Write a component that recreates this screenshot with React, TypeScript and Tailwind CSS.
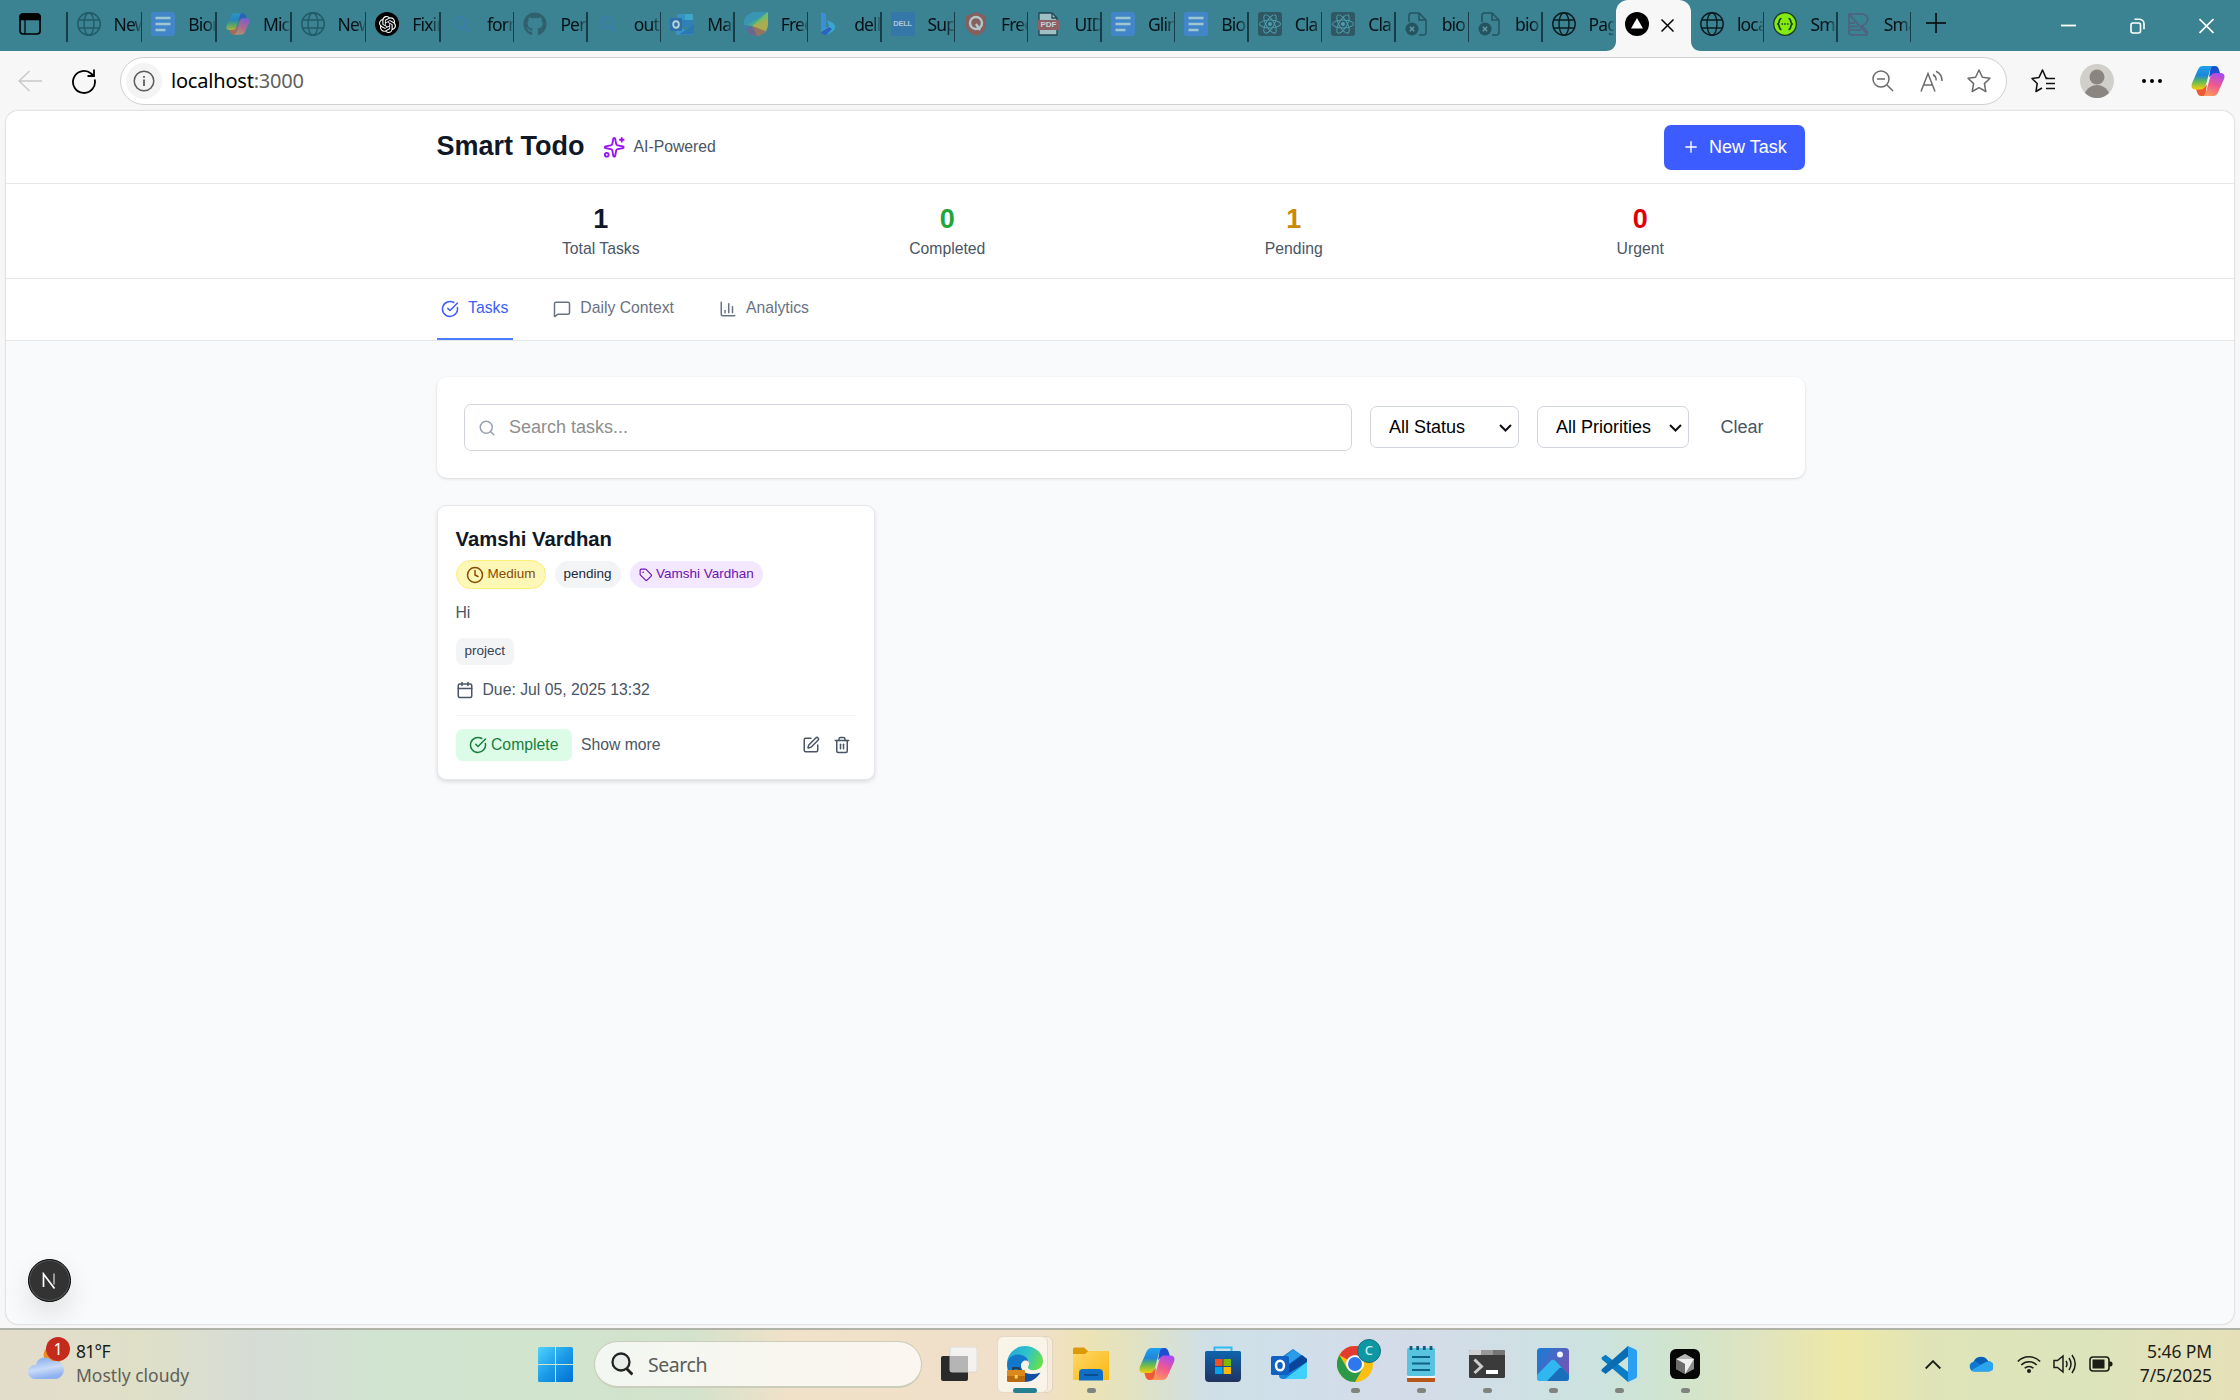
import React, { ReactNode, useId } from "react";
import {
  Calendar,
  ChartColumn,
  CircleCheckBig,
  Clock,
  MessageSquare,
  Plus,
  Search,
  Sparkles,
  SquarePen,
  Tag,
  Trash2,
} from "lucide-react";
import { FaGithub, FaReact } from "react-icons/fa";
import { SiOpenai } from "react-icons/si";

/* ---------- shared glyphs ---------- */

function Globe() {
  return (
    <svg viewBox="0 0 24 24" className="size-6" fill="none" stroke="currentColor" strokeWidth="1.4">
      <circle cx="12" cy="12" r="11.2" />
      <ellipse cx="12" cy="12" rx="5" ry="11.2" />
      <path d="M2 8h20M2 16h20" />
    </svg>
  );
}

function Copilot({ className }: { className: string }) {
  const id = useId();
  return (
    <svg viewBox="0 0 36 34" className={className}>
      <defs>
        <linearGradient id={id + "a"} x1="0" y1="0" x2="0" y2="1">
          <stop offset="0" stopColor="#1fa2f0" />
          <stop offset="0.4" stopColor="#1d86d8" />
          <stop offset="0.65" stopColor="#5cb85a" />
          <stop offset="1" stopColor="#f7cf0a" />
        </linearGradient>
        <linearGradient id={id + "b"} x1="0.7" y1="0" x2="0.3" y2="1">
          <stop offset="0" stopColor="#a84bf0" />
          <stop offset="0.5" stopColor="#f0598f" />
          <stop offset="1" stopColor="#fb9a5c" />
        </linearGradient>
      </defs>
      <path d="M21 1h4c3 0 4 1.500 5 5l1.400 4.500H24c-2.500 0-4.500 1.500-5 3z" fill="#1b4fd0" />
      <path d="M15 33h-4c-3 0-4-1.500-5-5L4.600 23.500H12c2.500 0 4.500-1.500 5-3z" fill="#ee5a35" />
      <path d="M13 1c-3.500 0-5.200 2-6.300 5.500L1 19.500C-.3 23.500 1 26 4.500 26H10c3.500 0 5-2 6-5.500l3.500-13C20.500 4 21.500 1 25 1z" fill={`url(#${id}a)`} />
      <path d="M23 33c3.500 0 5.200-2 6.300-5.500L35 15c1.300-4 0-6.500-3.500-6.500H26c-3.500 0-5 2-6 5.500l-3.500 12.500C15.500 30 14.500 33 11 33z" fill={`url(#${id}b)`} />
    </svg>
  );
}

function DocsIcon() {
  return (
    <svg viewBox="0 0 24 24" className="size-6">
      <rect width="24" height="24" rx="3" fill="#4285c8" />
      <path d="M4.500 6h15M4.500 12h15M4.500 18h10" stroke="#9cc9d0" strokeWidth="2.300" />
    </svg>
  );
}

function FadedSearch() {
  return (
    <svg viewBox="0 0 24 24" className="size-6" fill="none" stroke="#3a7fae" strokeWidth="2">
      <circle cx="10.500" cy="10.500" r="5.500" />
      <path d="M14.500 14.500l5 5" />
    </svg>
  );
}

function OutlookIcon({ className }: { className: string }) {
  return (
    <svg viewBox="0 0 36 36" className={className}>
      <path d="M8 13L22 3l14 10v16a4 4 0 0 1-4 4H12a4 4 0 0 1-4-4z" fill="#1583d8" />
      <path d="M12 12L22 4l8 5-14 10z" fill="#2b9cea" />
      <path d="M16 20L31 9l5 4v3L18 27z" fill="#0a459c" />
      <path d="M14 33L36 16v13a4 4 0 0 1-4 4z" fill="#3fd0fb" />
      <rect y="10" width="18" height="19" rx="1.500" fill="#0f62c4" />
      <ellipse cx="9" cy="19.500" rx="4" ry="4.800" fill="none" stroke="#fff" strokeWidth="2.500" />
    </svg>
  );
}

/* Older Outlook mark: envelope with a tiled sheet behind it. */
function OutlookClassic() {
  return (
    <svg viewBox="0 0 24 24" className="size-6">
      <path d="M7 2h16v13H7z" fill="#2f80b4" />
      <path d="M7 2h8v6H7z" fill="#3592c2" />
      <path d="M15 2h8v6h-8z" fill="#3fa6c8" />
      <path d="M6 12l9 6 9-6v9a2 2 0 0 1-2 2H8a2 2 0 0 1-2-2z" fill="#3b96cc" />
      <path d="M24 12L9 22.500h13a2 2 0 0 0 2-2z" fill="#2d78ae" />
      <rect y="6" width="12" height="13" rx="1.200" fill="#2c70a8" />
      <ellipse cx="6" cy="12.500" rx="2.800" ry="3.300" fill="none" stroke="#b8d3da" strokeWidth="1.900" />
    </svg>
  );
}

function LeafIcon() {
  return (
    <svg viewBox="0 0 24 24" className="size-6">
      <defs>
        <clipPath id="leaf">
          <path d="M12 0h12v12A12 12 0 1 1 12 0z" />
        </clipPath>
      </defs>
      <g clipPath="url(#leaf)">
        <rect width="24" height="24" fill="#45a88e" />
        <path d="M0 0h24L0 15z" fill="#3a95b5" />
        <path d="M24 0L8 14l16-4z" fill="#78bb70" />
        <path d="M24 6L8 14l16 8z" fill="#a8ac52" />
        <path d="M8 14l16 6v4H12z" fill="#96735f" />
        <path d="M8 14l5 10H0v-5z" fill="#68678f" />
        <path d="M8 14L0 21v-8z" fill="#4577a5" />
      </g>
    </svg>
  );
}

function BingIcon() {
  return (
    <svg viewBox="0 0 24 24" className="size-6">
      <path d="M4 0l5 2v15l-5 4z" fill="#3b8fd8" />
      <path d="M10 8l6 3c3 2 3 7-1 9l-6 3c-3 0-5-2-5-4l8-5z" fill="#3aa5cf" />
      <path d="M4 20l8-5 3 2-6 6c-3 0-5-1-5-3z" fill="#2c63c0" />
    </svg>
  );
}

function DellIcon() {
  return (
    <span className="flex size-6 items-center justify-center bg-[#3577a8] font-['Liberation_Sans'] text-[7.500px] font-bold tracking-[-0.300px] text-[#a8cbd6]">
      DELL
    </span>
  );
}

function ShieldQ() {
  return (
    <svg viewBox="0 0 24 24" className="size-6">
      <path d="M12 0l10 4v9c0 6-5 9-10 11C7 22 2 19 2 13V4z" fill="#85605f" />
      <circle cx="12" cy="11" r="6" fill="none" stroke="#b4c8cb" strokeWidth="2.400" />
      <path d="M12 12l4 6" stroke="#b4c8cb" strokeWidth="2.400" />
    </svg>
  );
}

function PdfIcon() {
  return (
    <span className="relative block size-6">
      <svg viewBox="0 0 24 24" className="size-6">
        <path d="M2 1h13l5 5v17H2z" fill="#9fbfc4" stroke="#1f4651" strokeWidth="1.300" />
        <path d="M15 1v5h5" fill="none" stroke="#1f4651" strokeWidth="1.300" />
      </svg>
      <span className="absolute top-[8px] left-0 flex h-[10px] w-[22px] items-center justify-center bg-[#8f5f66] font-['Liberation_Sans'] text-[8px] font-bold text-[#c3d3d6]">
        PDF
      </span>
    </span>
  );
}

function ReactIcon() {
  return (
    <span className="flex size-6 items-center justify-center rounded-[3px] bg-[#2f5864]">
      <FaReact className="size-[22px] text-[#4d9fb2]" />
    </span>
  );
}

function FileX() {
  return (
    <svg viewBox="0 0 24 24" className="size-6" fill="none" stroke="#245460" strokeWidth="1.500">
      <path d="M4 10V3.500A2.500 2.500 0 0 1 6.500 1H14l7 7v12.500a2.500 2.500 0 0 1-2.500 2.500H14" />
      <path d="M14 1v7h7" />
      <circle cx="7" cy="17" r="6.500" fill="#245460" stroke="none" />
      <path d="M4.800 14.800l4.400 4.400M9.200 14.800l-4.400 4.400" stroke="#5c9aa6" />
    </svg>
  );
}

function Swagger() {
  return (
    <svg viewBox="0 0 24 24" className="size-6" fill="none" stroke="#173b2b" strokeWidth="1.300">
      <circle cx="12" cy="12" r="11.300" fill="#85ea0d" />
      <path d="M8.500 6.500c-3 0-1.500 4-3.500 5.500 2 1.500.5 5.500 3.500 5.500M15.500 6.500c3 0 1.500 4 3.500 5.500-2 1.500-.5 5.500-3.500 5.500M8.500 12h1.600M11.200 12h1.600M14 12h1.600" strokeWidth="1.700" />
    </svg>
  );
}

function SmDoc() {
  return (
    <svg viewBox="0 0 24 24" className="size-6" fill="none" stroke="#505f7d" strokeWidth="1.500">
      <path d="M2 2h12c6 0 8 4 6 8-1 2-3 3-5 4l5 5v4H5a3 3 0 0 1-3-3z" />
      <path d="M3 3l16 18M3 11h5M3 14.500h8M3 18h11" />
    </svg>
  );
}

/* ---------- browser chrome ---------- */

type BrowserTab = { icon: ReactNode; title: string; wide?: boolean; noSep?: boolean };

const leftTabs: BrowserTab[] = [
  { icon: <span className="text-[#235965]"><Globe /></span>, title: "New", wide: true },
  { icon: <DocsIcon />, title: "Biom", wide: true },
  { icon: <Copilot className="size-6 opacity-60" />, title: "Micr", wide: true },
  { icon: <span className="text-[#235965]"><Globe /></span>, title: "New", wide: true },
  {
    icon: (
      <span className="flex size-6 items-center justify-center rounded-full bg-black text-white">
        <SiOpenai className="size-[17px]" />
      </span>
    ),
    title: "Fixin",
    wide: true,
  },
  { icon: <FadedSearch />, title: "form" },
  { icon: <FaGithub className="size-6 text-[#30606d]" />, title: "Pers" },
  { icon: <FadedSearch />, title: "outl" },
  { icon: <OutlookClassic />, title: "Mail" },
  { icon: <LeafIcon />, title: "Free" },
  { icon: <BingIcon />, title: "dell" },
  { icon: <DellIcon />, title: "Sup" },
  { icon: <ShieldQ />, title: "Free" },
  { icon: <PdfIcon />, title: "UID" },
  { icon: <DocsIcon />, title: "Glim" },
  { icon: <DocsIcon />, title: "Bio" },
  { icon: <ReactIcon />, title: "Cla" },
  { icon: <ReactIcon />, title: "Cla" },
  { icon: <FileX />, title: "bio" },
  { icon: <FileX />, title: "bio" },
  { icon: <span className="text-[#0a1c20]"><Globe /></span>, title: "Page", noSep: true },
];

const rightTabs: BrowserTab[] = [
  { icon: <span className="text-[#0a1c20]"><Globe /></span>, title: "loca" },
  { icon: <Swagger />, title: "Sma" },
  { icon: <SmDoc />, title: "Sma" },
];

function InactiveTab({ tab }: { tab: BrowserTab }) {
  return (
    <div className={`flex h-12 shrink-0 items-center pl-[9px] ${tab.wide ? "w-[74.700px]" : "w-[73.440px]"}`}>
      <div className="w-6 shrink-0">{tab.icon}</div>
      <div className="ml-[13px] min-w-0 flex-1 overflow-hidden text-[17.500px] leading-[30px] tracking-[-0.850px] whitespace-nowrap text-[#061215] [mask-image:linear-gradient(90deg,#000_68%,transparent_108%)]">
        {tab.title}
      </div>
      <div className={tab.noSep ? "mt-1 h-[30px] w-[1.500px]" : "mt-[5px] h-[30px] w-[1.500px] bg-[#173e48]"} />
    </div>
  );
}

function TabStrip() {
  return (
    <div className="flex h-[51px] shrink-0 bg-[#3b8292]">
      <div className="flex h-12 w-[67.500px] shrink-0 items-center pl-[19px]">
        <svg viewBox="0 0 22 22" className="size-[22px]" fill="none" stroke="#000" strokeWidth="1.700">
          <rect x="1" y="1" width="20" height="20" rx="3" />
          <path d="M1 4a3 3 0 0 1 3-3h14a3 3 0 0 1 3 3v2.500H1z" fill="#000" />
          <path d="M6 6v15" strokeWidth="1.200" />
        </svg>
        <div className="mt-[5px] ml-auto h-[30px] w-[1.500px] bg-[#173e48]" />
      </div>
      {leftTabs.map((t, i) => (
        <InactiveTab key={i} tab={t} />
      ))}
      <div className="relative flex w-[75px] shrink-0 items-center rounded-t-[12px] bg-[#f7f7f7] pb-[3px] pl-[9px]">
        <svg viewBox="0 0 10 10" className="absolute bottom-0 left-[-10px] size-[10px]">
          <path d="M10 0v10H0C6 10 10 6 10 0z" fill="#f7f7f7" />
        </svg>
        <svg viewBox="0 0 10 10" className="absolute right-[-10px] bottom-0 size-[10px]">
          <path d="M0 0v10h10C4 10 0 6 0 0z" fill="#f7f7f7" />
        </svg>
        <svg viewBox="0 0 24 24" className="size-6">
          <circle cx="12" cy="12" r="12" />
          <path d="M12 6l6 10.500H6z" fill="#fff" />
        </svg>
        <svg viewBox="0 0 13 13" className="mt-[2px] ml-[12px] size-[13px]" stroke="#000" strokeWidth="1.500">
          <path d="M.5.5l12 12M12.500.5l-12 12" />
        </svg>
      </div>
      {rightTabs.map((t, i) => (
        <InactiveTab key={i} tab={t} />
      ))}
      <svg viewBox="0 0 20 20" className="mt-[13px] ml-[15px] size-5 shrink-0" stroke="#000" strokeWidth="1.500">
        <path d="M10 0v20M0 10h20" />
      </svg>
      <div className="ml-auto flex h-[51px] items-center pr-[26px]">
        <svg viewBox="0 0 15 16" className="h-4 w-[15px]" stroke="#fff" strokeWidth="1.800">
          <path d="M0 7.500h15" />
        </svg>
        <svg viewBox="0 0 15 16" className="ml-[54px] h-4 w-[15px]" fill="none" stroke="#fff" strokeWidth="1.600">
          <rect x="1" y="5" width="9.500" height="10" rx="2" />
          <path d="M4.500 1.200h5a4.500 4.500 0 0 1 4.500 4.500v5.500" />
        </svg>
        <svg viewBox="0 0 15 16" className="ml-[54px] h-4 w-[15px]" stroke="#fff" strokeWidth="1.700">
          <path d="M.5 1l14 14M14.500 1L.5 15" />
        </svg>
      </div>
    </div>
  );
}

function Toolbar() {
  return (
    <div className="flex h-[59px] shrink-0 items-center bg-[#f7f7f7] pt-[1px] pl-[18px]">
      <svg viewBox="0 0 24 22" className="h-[22px] w-6 shrink-0" fill="none" stroke="#c8c8c8" strokeWidth="1.500">
        <path d="M24 11H1M11.500 1L1 11l10.500 10" />
      </svg>
      <svg viewBox="0 0 24 25" className="ml-[30px] h-[25px] w-6 shrink-0" fill="none" stroke="#000" strokeWidth="1.800">
        <path d="M22.700 10.500A11 11 0 1 1 19 4.500l3 2.500" />
        <path d="M22 .5V7h-6.500" />
      </svg>
      <div className="ml-[24px] flex h-[48px] w-[1887px] shrink-0 items-center rounded-full border-[1.500px] border-[#d0d0d0] bg-white pl-[5px]">
        <div className="flex size-9 items-center justify-center rounded-full bg-[#f4f4f4]">
          <svg viewBox="0 0 22 22" className="size-[22px]" fill="none" stroke="#5c5c5c" strokeWidth="1.500">
            <circle cx="11" cy="11" r="9.800" />
            <path d="M11 9.500v6.500M11 6v1.800" strokeWidth="1.800" />
          </svg>
        </div>
        <div className="ml-[9px] text-[20px] tracking-[-0.200px] text-black">
          localhost<span className="text-[#5f5f5f]">:3000</span>
        </div>
        <div className="ml-auto flex items-center pr-[15px] text-[#6b6b6b]">
          <svg viewBox="0 0 22 22" className="size-[22px]" fill="none" stroke="currentColor" strokeWidth="1.500">
            <circle cx="9" cy="9" r="8" />
            <path d="M15 15l6 6M5 9h8" />
          </svg>
          <svg viewBox="0 0 24 22" className="ml-[26px] h-[22px] w-6" fill="none" stroke="currentColor" strokeWidth="1.500">
            <path d="M1 21.500L8 3.500l7 18M3.500 15h9" />
            <path d="M13 4.500c2 1.300 3.200 3.500 3.200 6M16 1.200c3.800 1.800 6 5 6 9.800" strokeWidth="1.500" />
          </svg>
          <svg viewBox="0 0 24 24" className="ml-[23px] size-6" fill="none" stroke="currentColor" strokeWidth="1.500" strokeLinejoin="round">
            <path d="M12 1l3.400 7.200 7.600 1-5.600 5.400 1.400 7.900-6.800-3.800-6.800 3.800 1.400-7.900L1 9.200l7.600-1z" />
          </svg>
        </div>
      </div>
      <svg viewBox="0 0 25 24" className="ml-[24px] h-6 w-[25px] shrink-0" fill="none" stroke="#111" strokeWidth="1.600" strokeLinejoin="round">
        <path d="M16.500 9h-1.500L11.500 1 8 8.500l-7 1 5.200 5L5 22.500l6-3.500M14.500 9.500H24M15 14.500h9M15 19.500h9" />
      </svg>
      <svg viewBox="0 0 34 34" className="ml-[24px] size-[34px] shrink-0">
        <circle cx="17" cy="17" r="17" fill="#d1cfca" />
        <circle cx="17" cy="13" r="7.500" fill="#8a8580" />
        <path d="M5 29c2-5 7-8 12-8s10 3 12 8c-3 3-7 5-12 5s-9-2-12-5z" fill="#8a8580" />
      </svg>
      <svg viewBox="0 0 20 4" className="ml-[28px] h-1 w-5 shrink-0">
        <circle cx="2" cy="2" r="2" />
        <circle cx="10" cy="2" r="2" />
        <circle cx="18" cy="2" r="2" />
      </svg>
      <Copilot className="ml-[29px] h-[32px] w-[34px] shrink-0" />
    </div>
  );
}

/* ---------- todo application ---------- */

const stats = [
  { value: "1", label: "Total Tasks", color: "text-[#101828]" },
  { value: "0", label: "Completed", color: "text-[#1fa53a]" },
  { value: "1", label: "Pending", color: "text-[#c98a00]" },
  { value: "0", label: "Urgent", color: "text-[#df0008]" },
];

const navTabs = [
  { label: "Tasks", Icon: CircleCheckBig, active: true },
  { label: "Daily Context", Icon: MessageSquare, active: false },
  { label: "Analytics", Icon: ChartColumn, active: false },
];

function Select({ label, width }: { label: string; width: string }) {
  return (
    <div className={`mb-[1px] flex h-[42px] shrink-0 items-center justify-between rounded-[7px] border border-[#d1d5dc] bg-white pr-[6px] pl-[18px] text-[18px] text-black ${width}`}>
      {label}
      <svg viewBox="0 0 13 8" className="mt-[2px] h-2 w-[13px]" fill="none" stroke="#111" strokeWidth="2">
        <path d="M1 1l5.500 5.500L12 1" />
      </svg>
    </div>
  );
}

function TaskCard() {
  return (
    <article className="h-[275px] w-[438px] rounded-[9px] border border-[#e5e7eb] bg-white pt-[18px] pr-[18px] pl-[17.500px] shadow-[0_2px_4px_rgba(0,0,0,0.120)]">
      <h3 className="text-[20.250px] leading-[31px] font-bold text-[#101828]">Vamshi Vardhan</h3>
      <div className="mt-[5px] flex items-center gap-[9px] text-[13.500px] leading-[18px]">
        <span className="flex h-[29px] items-center gap-[4px] rounded-full border border-[#fcef7a] bg-[#fdf7b8] pr-[9px] pl-[9px] text-[#894b00]">
          <Clock className="size-[18px]" />
          <span className="pb-[1px]">Medium</span>
        </span>
        <span className="flex h-[27px] items-center rounded-full bg-[#f3f4f6] px-[9px] pb-[1px] text-[#1e2939]">pending</span>
        <span className="flex h-[27px] items-center gap-[4px] rounded-full bg-[#f3e8ff] px-[9px] text-[#6e11b0]">
          <Tag className="size-[13.500px]" />
          <span className="pb-[1px]">Vamshi Vardhan</span>
        </span>
      </div>
      <p className="mt-[12px] text-[15.750px] leading-[23px] text-[#4a5565]">Hi</p>
      <div className="mt-[14px] flex">
        <span className="flex h-[27px] items-center rounded-[7px] bg-[#f3f4f6] px-[9px] text-[13.500px] text-[#364153]">project</span>
      </div>
      <div className="mt-[13px] flex h-[23px] items-center gap-[9px] text-[15.750px] leading-[23px] text-[#4a5565]">
        <Calendar className="size-[18px]" />
        Due: Jul 05, 2025 13:32
      </div>
      <div className="mt-[14px] flex items-center border-t border-[#f3f4f6] pt-[13px] text-[15.750px] text-[#4a5565]">
        <button className="flex h-[32px] items-center gap-[4px] rounded-[7px] bg-[#dcfce7] px-[13.500px] text-[#1a7f3c]">
          <CircleCheckBig className="size-[18px]" />
          <span className="pb-[1px]">Complete</span>
        </button>
        <span className="ml-[9px] pb-[1px]">Show more</span>
        <SquarePen className="ml-auto size-[18px]" />
        <Trash2 className="mr-[5px] ml-[13px] size-[18px]" />
      </div>
    </article>
  );
}

function TodoApp() {
  return (
    <div className="mx-[6px] flex h-[1213px] shrink-0 flex-col overflow-hidden rounded-[12px] bg-[#f9fafb] font-['Liberation_Sans',Arial,sans-serif] shadow-[0_0_2px_rgba(0,0,0,0.300)]">
      <header className="h-[73px] shrink-0 border-b border-[#e5e7eb] bg-white">
        <div className="mr-[429px] ml-[431px] flex h-full items-center">
          <h1 className="-ml-[0.500px] pb-[2px] text-[27px] font-bold text-[#101828]">Smart Todo</h1>
          <Sparkles className="ml-[18px] size-[22.500px] text-[#9810fa]" />
          <span className="ml-[8.500px] text-[15.750px] text-[#4a5565]">AI-Powered</span>
          <button className="ml-auto flex h-[45px] w-[141px] items-center rounded-[7px] bg-[#3d5cff] pl-[18px] text-[18px] text-white">
            <Plus className="size-[18px]" strokeWidth={1.800} />
            <span className="ml-[9px] pt-[1px] whitespace-nowrap">New Task</span>
          </button>
        </div>
      </header>
      <section className="h-[95px] shrink-0 border-b border-[#e5e7eb] bg-white pt-[17px]">
        <div className="mr-[429px] ml-[431px] grid grid-cols-4 gap-[18px] text-center">
          {stats.map((s) => (
            <div key={s.label} className="-ml-[1px]">
              <div className={`text-[27px] leading-[36px] font-bold ${s.color}`}>{s.value}</div>
              <div className="text-[15.750px] leading-[23px] text-[#4a5565]">{s.label}</div>
            </div>
          ))}
        </div>
      </section>
      <nav className="h-[62px] shrink-0 border-b border-[#e5e7eb] bg-white">
        <div className="mr-[429px] ml-[431px] flex h-full gap-[36px] text-[15.750px]">
          {navTabs.map(({ label, Icon, active }) => (
            <div
              key={label}
              className={`flex items-center gap-[9px] border-b-2 pr-[5px] pl-[4px] ${active ? "border-[#4a7dff] text-[#3d5cff]" : "border-transparent text-[#6a7282]"}`}
            >
              <Icon className="size-[18px]" />
              <span className="pb-[2px]">{label}</span>
            </div>
          ))}
        </div>
      </nav>
      <main className="mr-[429px] ml-[431px] flex-1 pt-[36px]">
        <div className="mb-[27px] flex h-[101px] items-center gap-[18px] rounded-[10px] bg-white px-[27px] text-[18px] shadow-[0_1px_3px_rgba(0,0,0,0.140)]">
          <div className="flex h-[47px] w-[888px] items-center rounded-[7px] border border-[#d1d5dc] pl-[12.500px] text-[#8e8e8e]">
            <Search className="size-[18px] text-[#99a1af]" />
            <span className="ml-[13.500px]">Search tasks...</span>
          </div>
          <Select label="All Status" width="w-[149px]" />
          <Select label="All Priorities" width="w-[152px]" />
          <button className="px-[13.500px] text-[#4a5565]">Clear</button>
        </div>
        <TaskCard />
      </main>
      <div className="mb-[22px] ml-[21.500px] flex size-[43px] shrink-0 items-center justify-center rounded-full border border-black bg-[#333] shadow-[0_12px_28px_rgba(0,0,0,0.110)] ring-1 ring-[#5a5a5a] ring-inset">
        <svg viewBox="0 0 16 18" className="h-[18px] w-4" fill="none" stroke="#fff" strokeWidth="1.700">
          <path d="M2.500 15V2l11 14.500" />
          <path d="M13 1.500v11" stroke="#aaa" />
        </svg>
      </div>
    </div>
  );
}

/* ---------- taskbar ---------- */

function TaskSlot({ children, running, active }: { children: ReactNode; running?: boolean; active?: boolean }) {
  return (
    <div className="relative flex h-full w-[66px] shrink-0 items-center justify-center pb-[2px]">
      {active && <div className="absolute top-[6px] left-[5px] h-[57px] w-[56px] rounded-[6px] border border-[#e0d3bb] bg-[#f5ecdc]" />}
      {active && <div className="absolute top-[6px] left-[5px] h-[57px] w-[51px] rounded-[6px] border border-[#e6dac6] bg-[#faf3e8]" />}
      <div className="relative">{children}</div>
      {active && <div className="absolute top-[58px] left-[21px] h-[5px] w-6 rounded-full bg-[#26808f]" />}
      {running && <div className="absolute top-[58px] left-[28.500px] h-[5px] w-[9px] rounded-full bg-[#7f857e]" />}
    </div>
  );
}

function WindowsLogo() {
  return (
    <svg viewBox="0 0 35 35" className="size-[35px] shrink-0">
      <defs>
        <linearGradient id="win" x1="0" y1="0" x2="1" y2="1">
          <stop offset="0" stopColor="#4fd3ff" />
          <stop offset="0.500" stopColor="#1c9be8" />
          <stop offset="1" stopColor="#0070d0" />
        </linearGradient>
      </defs>
      <path d="M1.500 0H17v17H0V1.500A1.500 1.500 0 0 1 1.500 0zM18 0h15.500A1.500 1.500 0 0 1 35 1.500V17H18zM0 18h17v17H1.500A1.500 1.500 0 0 1 0 33.500zM18 18h17v15.500a1.500 1.500 0 0 1-1.500 1.500H18z" fill="url(#win)" />
    </svg>
  );
}

function EdgeIcon() {
  return (
    <svg viewBox="0 0 36 36" className="size-9">
      <defs>
        <linearGradient id="edgeTop" x1="0" y1="0.200" x2="1" y2="0.500">
          <stop offset="0" stopColor="#21a7dc" />
          <stop offset="0.550" stopColor="#2fc4c9" />
          <stop offset="1" stopColor="#66df4c" />
        </linearGradient>
      </defs>
      <path d="M0 18C0 8 8 0 18 0s18 7 18 15c0 6-5 9.500-10 9.500-5 0-7-1.500-5-4 2.500-3.500 1-7.500-3-9.500C10 8 2 11 0 18z" fill="url(#edgeTop)" />
      <path d="M0 18c1-8 9-11.500 16-8.500 4 1.800 6 4.500 5.500 7-3-3-7.500-.5-7.500 4 0 8 8 10 14 10-5 5-14 6.500-20 3C2 30 0 24 0 18z" fill="#1278cc" />
      <path d="M14 19c0 8 7 11 19.500 7.500C30 32 25 36 18 36c-4-3-6-10-4-17z" fill="#114f9f" />
      <path d="M14 20c0-5 5-7 7.500-4 1 1.500 0 3.500-.5 5 0 3 5 4.500 11 3l2 1.500c-4 3-9 2.500-13 .5-4-1.500-7-3-7-6z" fill="#f8f2e7" />
      <rect x="0" y="24" width="18" height="12" rx="1.500" fill="#b86a10" />
      <path d="M0 25.500A1.500 1.500 0 0 1 1.500 24h15a1.500 1.500 0 0 1 1.500 1.500V30H0z" fill="#d98a1a" />
      <path d="M6 24v-2h6v2" fill="none" stroke="#30302c" strokeWidth="1.500" />
      <rect x="7.700" y="29" width="3" height="3.500" fill="#ffd34a" />
    </svg>
  );
}

function FolderIcon() {
  return (
    <svg viewBox="0 0 36 34" className="h-[34px] w-9">
      <defs>
        <linearGradient id="folder" x1="0" y1="0" x2="1" y2="1">
          <stop offset="0" stopColor="#ffd768" />
          <stop offset="1" stopColor="#fab70f" />
        </linearGradient>
      </defs>
      <path d="M0 2A1.500 1.500 0 0 1 1.500.5H11L15 4H34.500A1.500 1.500 0 0 1 36 5.500V12H0z" fill="#dd9a08" />
      <path d="M0 7h12l3.500-3H34.500A1.500 1.500 0 0 1 36 5.500V33H1.500A1.500 1.500 0 0 1 0 31.500z" fill="url(#folder)" />
      <path d="M6 33.500V26a4 4 0 0 1 4-4h16a4 4 0 0 1 4 4v7.500z" fill="#0f6fc6" />
      <path d="M11 28h14" stroke="#0b4a8b" strokeWidth="1.800" />
    </svg>
  );
}

function StoreIcon() {
  return (
    <svg viewBox="0 0 36 36" className="size-9">
      <defs>
        <linearGradient id="store" x1="0" y1="0" x2="0" y2="1">
          <stop offset="0" stopColor="#0e64ad" />
          <stop offset="1" stopColor="#20335e" />
        </linearGradient>
      </defs>
      <path d="M9.500 7V1.500h17V7" fill="none" stroke="#2dbcf2" strokeWidth="2" />
      <path d="M0 6.500A1.500 1.500 0 0 1 1.500 5h33A1.500 1.500 0 0 1 36 6.500V32a4 4 0 0 1-4 4H4a4 4 0 0 1-4-4z" fill="url(#store)" />
      <path d="M10 13h7.500v7H10z" fill="#f25022" />
      <path d="M18.500 13H26v7h-7.500z" fill="#7fba00" />
      <path d="M10 21h7.500v7H10z" fill="#00a4ef" />
      <path d="M18.500 21H26v7h-7.500z" fill="#ffb900" />
    </svg>
  );
}

function ChromeIcon() {
  return (
    <div className="relative">
      <svg viewBox="0 0 36 36" className="size-9">
        <circle cx="18" cy="18" r="18" fill="#fbbf12" />
        <path d="M18 18L2.410 9A18 18 0 0 1 33.590 9z" fill="#e33b2e" />
        <path d="M33.590 9H18v9z" fill="#e33b2e" />
        <path d="M2.410 9L10.200 22.500 18 27l7.800-4.500L18 36A18 18 0 0 1 2.410 9z" fill="#2a9a48" />
        <circle cx="18" cy="18" r="9" fill="#fff" />
        <circle cx="18" cy="18" r="7" fill="#2d78ee" />
      </svg>
      <span className="absolute top-[-7px] left-[20px] flex size-6 items-center justify-center rounded-full border border-[#1b7078] bg-[#0c97a3] text-[13px] font-medium text-[#c7f0f0]">C</span>
    </div>
  );
}

function NotepadIcon() {
  return (
    <svg viewBox="0 0 28 36" className="h-9 w-7">
      <rect y="30" width="28" height="6" rx="1" fill="#b8561a" />
      <rect y="29" width="28" height="3" fill="#f2f2f2" />
      <rect y="2" width="28" height="28" rx="1.500" fill="#58c3df" />
      <path d="M5 11h18M5 17.500h18M5 24h18" stroke="#0c6386" strokeWidth="1.800" />
      <path d="M4 0v4M10.700 0v4M17.300 0v4M24 0v4" stroke="#125b7c" strokeWidth="2.800" />
    </svg>
  );
}

function TerminalIcon() {
  return (
    <svg viewBox="0 0 36 28" className="h-7 w-9">
      <rect width="36" height="28" rx="1.500" fill="#3b3b3b" />
      <path d="M0 5V1.500A1.500 1.500 0 0 1 1.500 0H12v5z" fill="#d0d0d0" />
      <path d="M12 0h12v5H12z" fill="#999" />
      <path d="M24 0h10.500A1.500 1.500 0 0 1 36 1.500V5H24z" fill="#757575" />
      <path d="M5.500 9.500l7 7-7 6.500" fill="none" stroke="#ccc" strokeWidth="3" />
      <rect x="17" y="20" width="12" height="4" fill="#fff" />
    </svg>
  );
}

function PhotosIcon() {
  return (
    <svg viewBox="0 0 32 33" className="h-[33px] w-8">
      <defs>
        <linearGradient id="photo" x1="0" y1="0" x2="1" y2="0.600">
          <stop offset="0" stopColor="#157ed6" />
          <stop offset="1" stopColor="#7455b4" />
        </linearGradient>
      </defs>
      <rect width="32" height="33" rx="3.500" fill="url(#photo)" />
      <path d="M0 27L14 12.500q2-1.500 4 0L32 27v2.500a3.500 3.500 0 0 1-3.500 3.500h-25A3.500 3.500 0 0 1 0 29.500z" fill="#30b7f0" />
      <path d="M10 33L22 20.500q2-1.500 4 0l6 6.500v2.500a3.500 3.500 0 0 1-3.500 3.500z" fill="#1a6fbd" />
      <circle cx="23" cy="6.500" r="3" fill="#f2f4fb" />
    </svg>
  );
}

function VsCodeIcon() {
  return (
    <svg viewBox="0 0 36 36" className="size-9">
      <path d="M2 10.500l2.500-1.800 22.500 17V36L1 13.500a2 2 0 0 1 1-3z" fill="#0a7cc4" />
      <path d="M2 26l2.500 2L27 10.500V0L1 23a2 2 0 0 0 1 3z" fill="#0a6cb2" />
      <path d="M27 0l7.500 3.500A2.500 2.500 0 0 1 36 6v24a2.500 2.500 0 0 1-1.500 2.500L27 36z" fill="#2aa0f2" />
    </svg>
  );
}

function CursorIcon() {
  return (
    <svg viewBox="0 0 30 30" className="size-[30px]">
      <rect width="30" height="30" rx="6" fill="#060606" />
      <path d="M15 5l9 5v10l-9 5-9-5V10z" fill="#8d8d8d" />
      <path d="M6 10l9-5 9 5-9 1z" fill="#b5b5b5" />
      <path d="M6 10h18l-9 15V15z" fill="#eee" />
      <path d="M6 10l9 5v10l-9-5z" fill="#6c6c6c" />
    </svg>
  );
}

function Taskbar() {
  return (
    <div className="flex h-[72px] shrink-0 border-t-2 border-[#b0b4a8] bg-[linear-gradient(90deg,#e3dccb_0px,#dfe0c8_143px,#d6dcd6_257px,#d0e4d0_385px,#d1e4cd_560px,#d3e2cc_690px,#f1e1c8_790px,#f0dfc9_1040px,#ede3b4_1085px,#e0e2c4_1140px,#d0dfe6_1205px,#cfdfe9_1265px,#d4dbe8_1414px,#d0dfe6_1500px,#cbe3de_1600px,#d2e4cc_1686px,#dfe4c0_1757px,#eee8a6_1843px,#dfe4b8_1930px,#dce4bc_2090px,#e6e0b8_2240px)]">
      <div className="flex w-[538px] shrink-0 pl-[28px]">
        <div className="relative mt-[18px] size-9">
          <svg viewBox="0 0 36 32" className="h-[32px] w-9">
            <defs>
              <linearGradient id="cloud" x1="0" y1="0" x2="0.300" y2="1">
                <stop offset="0" stopColor="#7ba4ea" />
                <stop offset="0.600" stopColor="#c9dbf8" />
                <stop offset="1" stopColor="#8fb0f0" />
              </linearGradient>
            </defs>
            <circle cx="25" cy="7" r="9.500" fill="#f28a1e" />
            <path d="M7 31a7 7 0 0 1 0-14h1a9 9 0 0 1 16-4 8 8 0 0 1 5 18z" fill="url(#cloud)" />
          </svg>
          <span className="absolute top-[-11px] left-[18px] flex size-6 items-center justify-center rounded-full bg-[#c42b1c] text-[16px] text-white">1</span>
        </div>
        <div className="mt-[9px] ml-[12px] text-[17.500px] leading-[24px] whitespace-nowrap">
          <div className="tracking-[-0.700px] text-[#1b1c18]">81°F</div>
          <div className="text-[#5f6058]">Mostly cloudy</div>
        </div>
      </div>
      <div className="flex items-center pb-[1px]">
        <WindowsLogo />
        <div className="ml-[21px] flex h-[47px] w-[328px] items-center rounded-full border border-b-2 border-[#c9cdb9] bg-[linear-gradient(90deg,#f2f7f2,#f7f6ef_45%,#fbf6ef)] pl-[16px]">
          <svg viewBox="0 0 22 24" className="h-6 w-[22px]" fill="none" stroke="#222" strokeWidth="2.300">
            <circle cx="10" cy="10" r="8.500" fill="#e9edea" />
            <path d="M15.500 16.500l6 6" strokeWidth="3" />
          </svg>
          <span className="ml-[15px] pt-[1px] text-[19.500px] tracking-[-0.450px] text-[#5a5c57]">Search</span>
        </div>
      </div>
      <div className="ml-[4px] flex">
        <TaskSlot>
          <svg viewBox="0 0 36 34" className="h-[34px] w-9">
            <rect y="9" width="27" height="25" rx="2" fill="#2a2a2a" />
            <rect x="9" width="27" height="25" rx="2" fill="#f3f2f0" stroke="#d8d4ce" strokeWidth="0.800" />
            <rect x="9" y="9" width="18" height="16" fill="#b5b5b5" />
          </svg>
        </TaskSlot>
        <TaskSlot active><EdgeIcon /></TaskSlot>
        <TaskSlot running><FolderIcon /></TaskSlot>
        <TaskSlot><Copilot className="h-[34px] w-9" /></TaskSlot>
        <TaskSlot><StoreIcon /></TaskSlot>
        <TaskSlot><OutlookIcon className="size-9" /></TaskSlot>
        <TaskSlot running><ChromeIcon /></TaskSlot>
        <TaskSlot running><NotepadIcon /></TaskSlot>
        <TaskSlot running><TerminalIcon /></TaskSlot>
        <TaskSlot running><PhotosIcon /></TaskSlot>
        <TaskSlot running><VsCodeIcon /></TaskSlot>
        <TaskSlot running><CursorIcon /></TaskSlot>
      </div>
      <div className="ml-auto flex items-center pr-[28px] pb-[2px]">
        <svg viewBox="0 0 16 9" className="h-[9px] w-4" fill="none" stroke="#1c1d17" strokeWidth="1.900">
          <path d="M.7 8.500L8 1.200l7.300 7.300" />
        </svg>
        <svg viewBox="0 0 24 16" className="ml-[28px] h-4 w-6">
          <path d="M5 15.500a5 5 0 0 1-.5-9.800A8 8 0 0 1 19 5a5.300 5.300 0 0 1 0 10.500z" fill="#0f78d4" />
          <path d="M5.500 4.500A8 8 0 0 1 19 5l-7 4z" fill="#0a5fb4" />
          <path d="M2 14.500L15 7c2-1.500 4-1.500 5-1.500a5 5 0 0 1 0 10H5c-1.200 0-2.200-.3-3-1z" fill="#2ba5ee" />
        </svg>
        <svg viewBox="0 0 24 18" className="ml-6 h-[18px] w-6" fill="none" stroke="#1c1d17" strokeWidth="1.600">
          <path d="M.8 6.500a15.500 15.500 0 0 1 22.400 0M4.300 10a10.800 10.800 0 0 1 15.400 0M7.700 13.300a6 6 0 0 1 8.600 0" />
          <circle cx="12" cy="16" r="2" fill="#1c1d17" stroke="none" />
        </svg>
        <svg viewBox="0 0 24 20" className="ml-[12px] h-5 w-6" fill="none" stroke="#1c1d17" strokeWidth="1.500">
          <path d="M1 6.500h3.500L10 2v16l-5.500-4.500H1zM13 6.800q2 3.200 0 6.400M16 4q4 6 0 12M19 1q6.500 9 0 18" />
        </svg>
        <svg viewBox="0 0 24 16" className="ml-[12px] h-4 w-6" fill="none" stroke="#1c1d17" strokeWidth="1.600">
          <rect x="1" y="1" width="19" height="14" rx="3" />
          <rect x="3.500" y="3.500" width="12" height="9" fill="#1c1d17" stroke="none" />
          <path d="M20 5.500h1.500a2 2 0 0 1 2 2v1a2 2 0 0 1-2 2H20z" fill="#1c1d17" stroke="none" />
        </svg>
        <div className="mt-[-2px] w-[99px] text-right text-[17.500px] leading-[24px] tracking-[-0.100px] whitespace-nowrap text-[#1c1d17]">
          <div>5:46 PM</div>
          <div>7/5/2025</div>
        </div>
      </div>
    </div>
  );
}

export default function App() {
  return (
    <div className="flex h-[1400px] w-[2240px] flex-col overflow-hidden bg-[#f7f7f7] font-['Noto_Sans','Open_Sans',sans-serif]">
      <TabStrip />
      <Toolbar />
      <div className="h-[1px] shrink-0" />
      <TodoApp />
      <div className="h-[4px] shrink-0" />
      <Taskbar />
    </div>
  );
}
